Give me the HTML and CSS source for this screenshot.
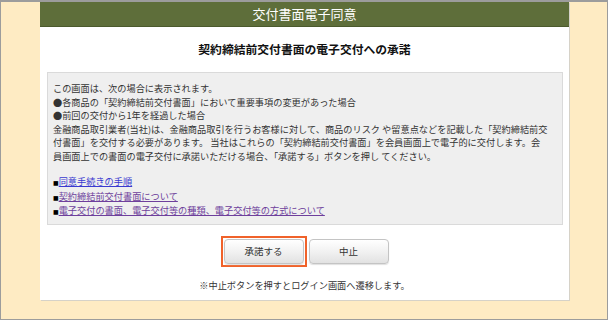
FILE: index.html
```html
<!DOCTYPE html>
<html lang="ja">
<head>
<meta charset="utf-8">
<title>交付書面電子同意</title>
<link rel="stylesheet" href="styles.css">
</head>
<body>
<div class="frame">
  <div class="panel">
    <div class="header">交付書面電子同意</div>
    <h1 class="subtitle">契約締結前交付書面の電子交付への承諾</h1>
    <div class="notice">
      <p class="text">この画面は、次の場合に表示されます。<br>●各商品の「契約締結前交付書面」において重要事項の変更があった場合<br>●前回の交付から1年を経過した場合<br>金融商品取引業者(当社)は、金融商品取引を行うお客様に対して、商品のリスク や留意点などを記載した「契約締結前交<br>付書面」を交付する必要があります。 当社はこれらの「契約締結前交付書面」を会員画面上で電子的に交付します。会<br>員画面上での書面の電子交付に承諾いただける場合、「承諾する」ボタンを押し てください。</p>
      <ul class="links">
        <li><span class="sq">■</span><a href="#" class="link">同意手続きの手順</a></li>
        <li><span class="sq">■</span><a href="#" class="link visited">契約締結前交付書面について</a></li>
        <li><span class="sq">■</span><a href="#" class="link visited">電子交付の書面、電子交付等の種類、電子交付等の方式について</a></li>
      </ul>
    </div>
    <div class="actions">
      <span class="focus-ring"><button class="btn">承諾する</button></span>
      <button class="btn">中止</button>
    </div>
    <p class="note">※中止ボタンを押すとログイン画面へ遷移します。</p>
  </div>
</div>
</body>
</html>
```
FILE: styles.css
```css
* { box-sizing: border-box; }
html, body { margin: 0; padding: 0; }
body {
  font-family: "Noto Sans CJK JP", "Noto Sans", sans-serif;
  color: #333;
}
.frame {
  width: 608px;
  height: 320px;
  background: #feebc3;
  border: 1px solid #9c9c9c;
  border-top-width: 2px;
  padding: 0 38px 0 39px;
}
.panel {
  height: 298px;
  background: #fff;
  box-shadow: 1px 1px 0 #d6d2c8;
  display: flex;
  flex-direction: column;
}
.header {
  height: 25px;
  background: #5e6e3a;
  border-bottom: 1px solid #4b5a2d;
  color: #fff;
  font-size: 13px;
  line-height: 24px;
  text-align: center;
}
.subtitle {
  margin: 14px 0 0;
  font-size: 11.8px;
  line-height: 16px;
  font-weight: bold;
  color: #111;
  text-align: center;
}
.notice {
  margin: 15px 6px 0 7px;
  background: #efefef;
  border: 1px solid #dadada;
  padding: 9px 5px 5px 5px;
  font-size: 9.2px;
  line-height: 13.5px;
}
.text {
  margin: 0;
  white-space: nowrap;
}
.links {
  list-style: none;
  margin: 12px 0 0;
  padding: 0;
}
.links li {
  white-space: nowrap;
}
.sq {
  font-family: "DejaVu Sans", sans-serif;
  font-size: 6px;
  color: #000;
}
.link {
  color: #3a3ad0;
  text-decoration: underline;
}
.link.visited {
  color: #6e3f9c;
}
.actions {
  display: flex;
  justify-content: center;
  align-items: center;
  gap: 2px;
  margin-top: 11px;
}
.focus-ring {
  display: flex;
  border: 2px solid #f0622a;
  padding: 1px;
}
.btn {
  width: 80px;
  height: 25px;
  padding: 0;
  font-family: "Noto Sans CJK JP", sans-serif;
  font-size: 9.5px;
  color: #333;
  background: linear-gradient(#ffffff, #f3f3f3 45%, #e2e2e2);
  border: 1px solid #c4c4c4;
  border-radius: 4px;
  box-shadow: 0 1px 1px #e0e0e0;
}
.note {
  margin: 11px 0 0;
  font-size: 9.2px;
  line-height: 14px;
  text-align: center;
}
```
